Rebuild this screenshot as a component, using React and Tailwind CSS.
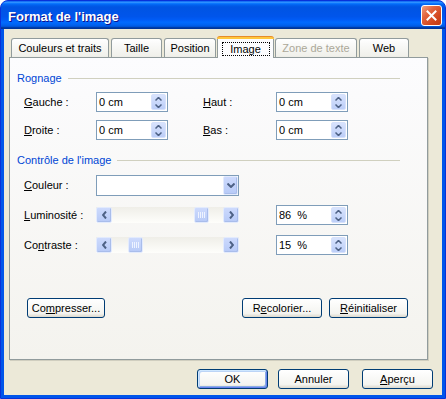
import React from "react";

const ARROW = "#4D6185";

function Spin({ value }) {
  return (
    <div className="flex h-[20px] w-[72px] border border-[#7F9DB9] bg-white">
      <div className="flex-1 whitespace-pre pl-[2px] leading-[18px]">{value}</div>
      <div className="my-[1px] mr-[1px] flex w-[15px] flex-col overflow-hidden rounded-[2px] border border-[#D6E1FB] bg-[linear-gradient(to_bottom,#D8E3FD,#BCCEF8)]">
        <div className="flex flex-1 items-center justify-center">
          <svg width="7" height="4" viewBox="0 0 7 4">
            <path d="M0.5 3.5 L3.5 0.5 L6.5 3.5" fill="none" stroke={ARROW} strokeWidth="1.5" />
          </svg>
        </div>
        <div className="flex flex-1 items-center justify-center">
          <svg width="7" height="4" viewBox="0 0 7 4">
            <path d="M0.5 0.5 L3.5 3.5 L6.5 0.5" fill="none" stroke={ARROW} strokeWidth="1.5" />
          </svg>
        </div>
      </div>
    </div>
  );
}

function ScrollBtn({ dir }) {
  return (
    <div className="flex w-[16px] items-center justify-center rounded-[2px] border border-[#E3EBFD] bg-[linear-gradient(to_bottom,#CDDAFD,#B7CAF7)] shadow-[inset_-1px_-1px_#A9BDEB]">
      <svg width="5" height="8" viewBox="0 0 5 8">
        {dir === "left" ? (
          <path d="M4 0.5 L1 4 L4 7.5" fill="none" stroke={ARROW} strokeWidth="2" />
        ) : (
          <path d="M1 0.5 L4 4 L1 7.5" fill="none" stroke={ARROW} strokeWidth="2" />
        )}
      </svg>
    </div>
  );
}

function Scroll({ thumb }) {
  return (
    <div className="flex h-[16px] w-[143px] bg-[linear-gradient(to_bottom,#EFEEE8,#FEFEFB)]">
      <ScrollBtn dir="left" />
      <div className="flex flex-1">
        <div
          className={`${thumb} flex w-[15px] items-center justify-center gap-[1px] rounded-[2px] border border-[#E3EBFD] bg-[linear-gradient(to_bottom,#CDDAFD,#B7CAF7)] shadow-[inset_-1px_-1px_#A9BDEB]`}
        >
          <div className="h-[6px] w-px bg-[#EEF3FF]" />
          <div className="h-[6px] w-px bg-[#EEF3FF]" />
          <div className="h-[6px] w-px bg-[#EEF3FF]" />
          <div className="h-[6px] w-px bg-[#EEF3FF]" />
        </div>
      </div>
      <ScrollBtn dir="right" />
    </div>
  );
}

function Heading({ children, className = "" }) {
  return (
    <div className={`flex h-[14px] w-[383px] items-center ${className}`}>
      <span className="leading-[14px] text-[#0046D5]">{children}</span>
      <div className="ml-[6px] h-px flex-1 bg-[#D0D0BF]" />
    </div>
  );
}

function Btn({ children, className = "", def = false }) {
  return (
    <div
      className={`flex h-[20px] items-center justify-center rounded-[3px] border border-[#003C74] bg-[linear-gradient(to_bottom,#FFFFFF,#F4F4F0_80%,#DCD8CC)] leading-[14px] ${
        def
          ? "shadow-[inset_1px_1px_#CEE7FF,inset_-1px_-1px_#6982EE,inset_2px_2px_#BCD4F6,inset_-2px_-2px_#89ADE4]"
          : ""
      } ${className}`}
    >
      {children}
    </div>
  );
}

function Tab({ children, className = "", disabled = false }) {
  return (
    <div
      className={`h-[19px] rounded-t-[3px] border-x border-t border-[#919B9C] bg-[linear-gradient(to_bottom,#FFFFFF,#FAFAF9_26%,#F0F0EA_95%,#ECEBE5)] pt-[3px] text-center leading-[13px] ${
        disabled ? "text-[#ACA899]" : ""
      } ${className}`}
    >
      {children}
    </div>
  );
}

export default function App() {
  return (
    <div className="h-[399px] w-[446px] bg-white font-['Liberation_Sans',Arial,sans-serif] text-[11px] text-black">
      <div className="flex h-full flex-col rounded-t-[8px] border border-[#0831D9] bg-[#0055EA]">
        {/* Title bar */}
        <div className="flex h-[28px] items-start rounded-t-[7px] bg-[linear-gradient(to_bottom,#0058EE_0%,#3593FF_4%,#288EFF_6%,#127DFF_8%,#036FFC_10%,#0262EE_14%,#0057E5_20%,#0054E3_24%,#0055EB_56%,#005BF5_66%,#026AFE_76%,#0062EF_86%,#0052D6_92%,#0040AB_94%,#003092_100%)] pl-[7px] pr-[3px] pt-[4px]">
          <span className="mt-[4px] flex-1 text-[13px] font-bold leading-[15px] text-white [text-shadow:1px_1px_#0F1089]">
            Format de l'image
          </span>
          <div className="flex h-[21px] w-[21px] items-center justify-center rounded-[3px] border border-white bg-[linear-gradient(135deg,#F0A080_0%,#E2643E_35%,#D2471F_70%,#C23A14_100%)]">
            <svg width="11" height="11" viewBox="0 0 11 11">
              <path d="M1.5 1.5 L9.5 9.5 M9.5 1.5 L1.5 9.5" stroke="#FFFFFF" strokeWidth="2" strokeLinecap="square" />
            </svg>
          </div>
        </div>

        {/* Client */}
        <div className="mx-[3px] mb-[3px] flex flex-1 flex-col bg-[#ECE9D8] pt-[7px]">
          {/* Tabs */}
          <div className="ml-[5px] flex h-[21px] items-end">
            <Tab className="ml-[2px] w-[98px]">Couleurs et traits</Tab>
            <Tab className="ml-[2px] w-[51px]">Taille</Tab>
            <Tab className="ml-[2px] w-[52px]">Position</Tab>
            <div className="relative z-10 mb-[-1px] ml-[1px] flex h-[22px] w-[57px] flex-col">
              <div className="h-[3px] rounded-t-[3px] border-t border-[#E68B2C] bg-[#FFC73C]" />
              <div className="flex flex-1 justify-center border-x border-[#919B9C] bg-[#FCFCFE] pt-[3px]">
                <div className="h-[14px] w-[48px] border border-dotted border-black text-center leading-[12px]">
                  Image
                </div>
              </div>
            </div>
            <Tab className="ml-[1px] w-[82px]" disabled>
              Zone de texte
            </Tab>
            <Tab className="ml-[2px] w-[50px]">Web</Tab>
          </div>

          {/* Panel */}
          <div className="ml-[5px] flex h-[303px] w-[419px] flex-col border border-[#919B9C] bg-[linear-gradient(to_bottom,#FCFCFE,#F4F3EE)] pl-[7px] shadow-[1px_1px_#D0CEBF]">
            <Heading className="mt-[13px]">Rognage</Heading>
            <div className="ml-[7px] mt-[7px] flex h-[20px] items-center">
              <div className="w-[72px]">
                <u>G</u>auche :
              </div>
              <Spin value="0 cm" />
              <div className="ml-[35px] w-[73px]">
                <u>H</u>aut :
              </div>
              <Spin value="0 cm" />
            </div>
            <div className="ml-[7px] mt-[8px] flex h-[20px] items-center">
              <div className="w-[72px]">
                <u>D</u>roite :
              </div>
              <Spin value="0 cm" />
              <div className="ml-[35px] w-[73px]">
                <u>B</u>as :
              </div>
              <Spin value="0 cm" />
            </div>

            <Heading className="mt-[13px]">Contrôle de l'image</Heading>
            <div className="ml-[7px] mt-[8px] flex h-[21px] items-center">
              <div className="w-[72px]">
                <u>C</u>ouleur :
              </div>
              <div className="flex h-[21px] w-[143px] border border-[#7F9DB9] bg-white">
                <div className="flex-1" />
                <div className="flex w-[15px] items-center justify-center rounded-[2px] border border-[#E3EBFD] bg-[linear-gradient(to_bottom,#CDDAFD,#B7CAF7)] shadow-[inset_-1px_-1px_#A9BDEB]">
                  <svg width="8" height="5" viewBox="0 0 8 5">
                    <path d="M0.5 0.5 L4 4 L7.5 0.5" fill="none" stroke={ARROW} strokeWidth="2" />
                  </svg>
                </div>
              </div>
            </div>
            <div className="ml-[7px] mt-[9px] flex h-[20px] items-center">
              <div className="w-[72px]">
                <u>L</u>uminosité :
              </div>
              <Scroll thumb="ml-[82px]" />
              <div className="ml-[37px]">
                <Spin value={"86  %"} />
              </div>
            </div>
            <div className="ml-[7px] mt-[10px] flex h-[20px] items-center">
              <div className="w-[72px]">
                Co<u>n</u>traste :
              </div>
              <Scroll thumb="ml-[16px]" />
              <div className="ml-[37px]">
                <Spin value={"15  %"} />
              </div>
            </div>

            <div className="mt-[43px] flex">
              <Btn className="ml-[10px] w-[78px]">
                Co<u>m</u>presser...
              </Btn>
              <Btn className="ml-[137px] w-[80px]">
                R<u>e</u>colorier...
              </Btn>
              <Btn className="ml-[7px] w-[79px]">
                <u>R</u>éinitialiser
              </Btn>
            </div>
          </div>

          {/* Bottom buttons */}
          <div className="mt-[9px] flex justify-end pr-[9px]">
            <Btn def className="w-[71px]">
              OK
            </Btn>
            <Btn className="ml-[10px] w-[71px]">Annuler</Btn>
            <Btn className="ml-[13px] w-[71px]">
              <u>A</u>perçu
            </Btn>
          </div>
        </div>
      </div>
    </div>
  );
}
